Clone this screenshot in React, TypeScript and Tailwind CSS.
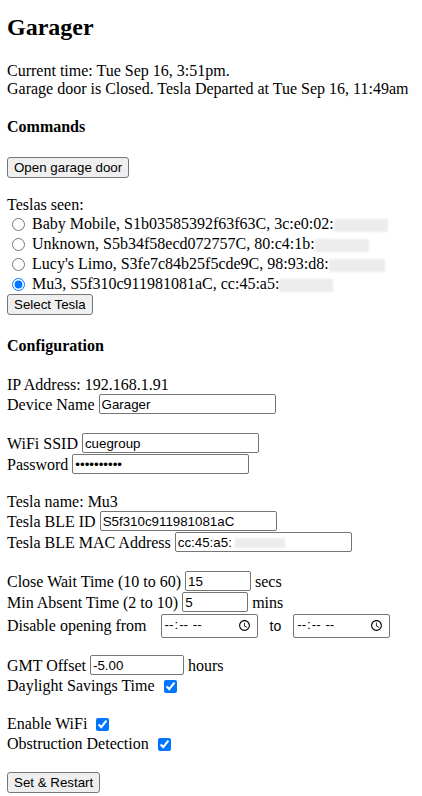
import React from "react";

const inputCls =
  "box-border h-[20px] rounded-[2px] border border-[#767676] bg-white px-[2px] font-['Liberation_Sans',Arial,sans-serif] text-[13.33px] text-black outline-none";
const btnCls =
  "box-border h-[21px] rounded-[3px] border border-[#767676] bg-[#efefef] px-[6px] font-['Liberation_Sans',Arial,sans-serif] text-[13.33px] leading-[15px] text-black";
const timeCls =
  "box-border h-[24px] w-[97px] rounded-[2px] border border-[#767676] bg-white px-[2px] font-['Liberation_Sans',Arial,sans-serif] text-[13.33px] tracking-[2px] text-black";
const checkCls = "m-0 ml-[5px] h-[13px] w-[13px] accent-[#0075ff]";

function Hidden({ w = 54 }: { w?: number }) {
  // blurred-out part of a MAC address
  return (
    <span
      className="inline-block h-[13px] bg-[#ececec] align-[-3px] blur-[1px]"
      style={{ width: w }}
    />
  );
}

const teslas = [
  { name: "Baby Mobile, S1b03585392f63f63C, 3c:e0:02:", w: 54, checked: false },
  { name: "Unknown, S5b34f58ecd072757C, 80:c4:1b:", w: 54, checked: false },
  { name: "Lucy's Limo, S3fe7c84b25f5cde9C, 98:93:d8:", w: 56, checked: false },
  { name: "Mu3, S5f310c911981081aC, cc:45:a5:", w: 54, checked: true },
];

function Field({
  label,
  value,
  width,
  type = "text",
  unit,
}: {
  label: string;
  value: string;
  width: number;
  type?: string;
  unit?: string;
}) {
  return (
    <div className="flex h-[21px] items-start gap-[4px]">
      <span className="leading-[21px]">{label}</span>
      <input type={type} defaultValue={value} className={inputCls} style={{ width }} />
      {unit && <span className="leading-[21px]">{unit}</span>}
    </div>
  );
}

export default function App() {
  return (
    <div className="min-h-[796px] bg-white pl-[7px] pt-[13px] font-['Liberation_Serif','Times_New_Roman',serif] text-[16px] leading-[18px] text-black">
      <h1 className="text-[24px] leading-[28px] font-bold">Garager</h1>

      <p className="mt-[21px]">
        Current time: Tue Sep 16, 3:51pm.
        <br />
        Garage door is Closed. Tesla Departed at Tue Sep 16, 11:49am
      </p>

      <h4 className="mt-[20px] font-bold">Commands</h4>
      <div className="mt-[21px]">
        <button className={btnCls}>Open garage door</button>
      </div>

      {/* teslas */}
      <div className="mt-[18px]">Teslas seen:</div>
      {teslas.map((t) => (
        <label key={t.name} className="flex h-[20px] items-center">
          <input
            type="radio"
            name="tesla"
            defaultChecked={t.checked}
            className="m-0 ml-[5px] mr-[7px] h-[13px] w-[13px] accent-[#0075ff]"
          />
          <span className="whitespace-nowrap">
            {t.name}
            <Hidden w={t.w} />
          </span>
        </label>
      ))}
      <div>
        <button className={btnCls}>Select Tesla</button>
      </div>

      <h4 className="mt-[22px] font-bold">Configuration</h4>

      <div className="mt-[21px]">IP Address: 192.168.1.91</div>
      <Field label="Device Name" value="Garager" width={177} />

      <div className="mt-[18px]">
        <Field label="WiFi SSID" value="cuegroup" width={177} />
        <Field label="Password" value="cuegroup12" width={177} type="password" />
      </div>

      <div className="mt-[18px]">Tesla name: Mu3</div>
      <Field label="Tesla BLE ID" value="S5f310c911981081aC" width={177} />
      <div className="flex h-[21px] items-start gap-[4px]">
        <span className="leading-[21px]">Tesla BLE MAC Address</span>
        <span className="relative inline-block">
          <input type="text" defaultValue="cc:45:a5:" className={inputCls} style={{ width: 177 }} />
          <span className="absolute left-[60px] top-[6px] h-[10px] w-[50px] bg-[#ececec] blur-[1px]" />
        </span>
      </div>

      <div className="mt-[18px]">
        <Field label="Close Wait Time (10 to 60)" value="15" width={66} unit="secs" />
        <Field label="Min Absent Time (2 to 10)" value="5" width={66} unit="mins" />
        <div className="flex h-[25px] items-center gap-[4px]">
          <span>Disable opening from</span>
          <input type="time" className={"ml-[10px] " + timeCls} />
          <span className="mx-[8px] font-['Liberation_Sans',Arial,sans-serif] text-[14px]">to</span>
          <input type="time" className={timeCls} />
        </div>
      </div>

      <div className="mt-[17px]">
        <Field label="GMT Offset" value="-5.00" width={94} unit="hours" />
        <label className="flex h-[20px] items-center gap-[4px]">
          <span>Daylight Savings Time</span>
          <input type="checkbox" defaultChecked className={checkCls} />
        </label>
      </div>

      <div className="mt-[18px]">
        <label className="flex h-[20px] items-center gap-[4px]">
          <span>Enable WiFi</span>
          <input type="checkbox" defaultChecked className={checkCls} />
        </label>
        <label className="flex h-[20px] items-center gap-[4px]">
          <span>Obstruction Detection</span>
          <input type="checkbox" defaultChecked className={checkCls} />
        </label>
      </div>

      <div className="mt-[18px] pb-[3px]">
        <button className={btnCls}>Set &amp; Restart</button>
      </div>
    </div>
  );
}
